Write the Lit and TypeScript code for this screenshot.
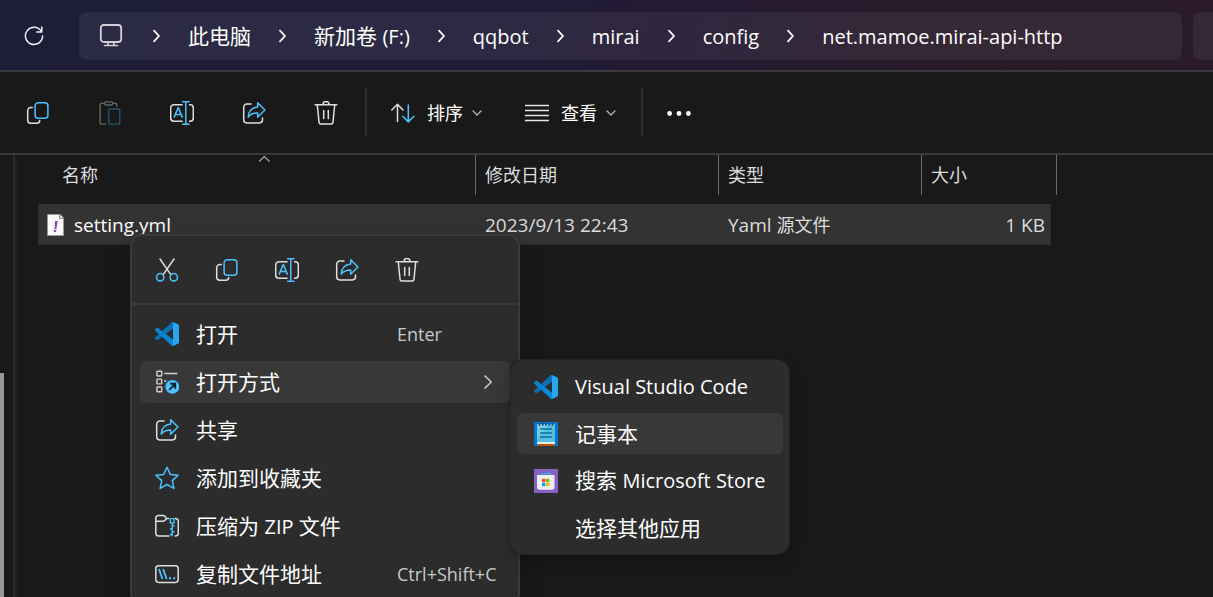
import { LitElement, html, svg, css, nothing } from "lit";
import { customElement, property, state } from "lit/decorators.js";
import { classMap } from "lit/directives/class-map.js";

const icon = (body: unknown, size = 24) =>
  html`<svg class="icon" width=${size} height=${size} viewBox="0 0 24 24" fill="none" aria-hidden="true">${body}</svg>`;

const W = "#dedede";
const B = "#4cc2ff";

const shapes: Record<string, unknown> = {
  refresh: svg`<path d="M19.2 7.2A8.6 8.6 0 1 0 20.6 12" stroke="#f0f0f0" stroke-width="1.5" stroke-linecap="round"/><path d="M19.8 3v5h-5" stroke="#f0f0f0" stroke-width="1.5" stroke-linecap="round" stroke-linejoin="round"/>`,
  computer: svg`<rect x="1.8" y="1" width="20.4" height="17" rx="3" stroke="#d2d0d8" stroke-width="1.8"/><path d="M5.5 21.5h13M9.2 18v3M14.8 18v3" stroke="#d2d0d8" stroke-width="1.6" stroke-linecap="round"/>`,
  copy: svg`<rect x="9.1" y="1.8" width="12.8" height="15.4" rx="3" stroke=${B} stroke-width="1.5"/><path d="M6.3 6.6H4.6A2.9 2.9 0 0 0 1.7 9.5v9.8a2.9 2.9 0 0 0 2.9 2.9h6.2a2.9 2.9 0 0 0 2.9-2.6" stroke=${W} stroke-width="1.5" stroke-linecap="round"/>`,
  paste: svg`<path d="M7 2.4H3.4a1.3 1.3 0 0 0-1.3 1.3v18.1a1.3 1.3 0 0 0 1.3 1.3H8" stroke="#666" stroke-width="1.4"/><rect x="6.6" y=".8" width="8.2" height="3.2" rx="1.6" stroke="#666" stroke-width="1.3"/><path d="M14.8 2.4h2.6a1.3 1.3 0 0 1 1.3 1.3v2" stroke="#666" stroke-width="1.4"/><rect x="10.8" y="8" width="11" height="15.1" rx="1.5" stroke="#2b536a" stroke-width="1.4"/>`,
  rename: svg`<path d="M12.6 3.8H3.8A3.1 3.1 0 0 0 .7 6.9v10.2a3.1 3.1 0 0 0 3.1 3.1h8.8M19 3.8h1.2a3.1 3.1 0 0 1 3.1 3.1v10.2a3.1 3.1 0 0 1-3.1 3.1H19" stroke=${W} stroke-width="1.5"/><path d="M4 16.6 8.1 6.8h.3l4.1 9.8M5.3 13.6h5.9" stroke=${B} stroke-width="1.5"/><path d="M12.6.8h6.4M12.6 23.2h6.4M15.8.8v22.4" stroke=${B} stroke-width="1.5" stroke-linecap="round"/>`,
  share: svg`<path d="M9 3H4.8A3.1 3.1 0 0 0 1.7 6.1v12.7a3.1 3.1 0 0 0 3.1 3.1h12.6a3.1 3.1 0 0 0 3.1-3.1V17" stroke=${W} stroke-width="1.5" stroke-linecap="round"/><path d="M15.7 1.8 22.9 9l-7.2 7.2v-4.3c-4.3 0-7.3 1.2-9.5 4.200.3-6 3.7-9.6 9.5-10.2z" stroke=${B} stroke-width="1.5" stroke-linejoin="round"/>`,
  trash: svg`<path d="M1.200 3.700h21.600" stroke=${W} stroke-width="1.600" stroke-linecap="round"/><path d="M9 3.400a3 3 0 0 1 6 0" stroke=${W} stroke-width="1.500"/><path d="M3.300 3.900 5 21a2.200 2.200 0 0 0 2.200 2.100h9.600A2.200 2.200 0 0 0 19 21l1.700-17.100" stroke=${W} stroke-width="1.500"/><path d="M9.700 9.500v8M14.300 9.500v8" stroke=${W} stroke-width="1.500" stroke-linecap="round"/>`,
  sort: svg`<path d="M6.500 20.500v-17M.8 9l5.700-5.700L12 9" stroke=${W} stroke-width="1.500" stroke-linecap="round" stroke-linejoin="round"/><path d="M17.300 4v16.800M11.800 15.300l5.500 5.600 5.600-5.600" stroke=${B} stroke-width="1.500" stroke-linecap="round" stroke-linejoin="round"/>`,
  view: svg`<path d="M0 4.500h24M0 9.500h24M0 14.500h24M0 19.500h24" stroke="#e4e4e4" stroke-width="1.400"/>`,
  more: svg`<g fill="#fff"><circle cx="2.600" cy="12.500" r="2.400"/><circle cx="12" cy="12.500" r="2.400"/><circle cx="21.400" cy="12.500" r="2.400"/></g>`,
  cut: svg`<path d="M5 1 15.800 16.600M19 1 8.200 16.600" stroke=${W} stroke-width="1.500" stroke-linecap="round"/><circle cx="5.200" cy="19.300" r="3.700" stroke=${B} stroke-width="1.500"/><circle cx="18.800" cy="19.300" r="3.700" stroke=${B} stroke-width="1.500"/>`,
  vscode: svg`<g transform="scale(.24)"><path fill="#0b6fb3" d="M96.4614 10.7962L75.8569 0.8755C73.4719 -0.2728 70.6217 0.2116 68.75 2.0833L1.2986 63.5832C-0.5157 65.2373 -0.5136 68.0937 1.3031 69.7452L6.8127 74.754C8.2979 76.1042 10.5347 76.2036 12.1338 74.9905L93.3609 13.3699C96.086 11.3026 100 13.2462 100 16.6667V16.4275C100 14.0265 98.6246 11.8378 96.4614 10.7962Z"/><path fill="#0b85d2" d="M96.4614 89.2038L75.8569 99.1245C73.4719 100.273 70.6217 99.7884 68.75 97.9167L1.2986 36.4169C-0.5157 34.7627 -0.5136 31.9063 1.3031 30.2548L6.8127 25.246C8.2979 23.8958 10.5347 23.7964 12.1338 25.0095L93.3609 86.6301C96.086 88.6974 100 86.7538 100 83.3333V83.5725C100 85.9735 98.6246 88.1622 96.4614 89.2038Z"/><path fill="#27a7f2" d="M75.8578 99.1263C73.4721 100.274 70.6219 99.7885 68.75 97.9166C71.0564 100.223 75 98.5895 75 95.3278V4.6721C75 1.4104 71.0564 -0.2231 68.75 2.0833C70.6219 0.2114 73.4721 -0.2737 75.8578 0.8736L96.4587 10.7807C98.6234 11.8217 100 14.0112 100 16.4132V83.5871C100 85.9891 98.6234 88.1786 96.4586 89.2196L75.8578 99.1263Z"/></g>`,
  openWith: svg`<g stroke="#d0d0d0" stroke-width="1.400"><rect x="1.900" y="1.200" width="4.800" height="4.800" rx=".6"/><rect x="1.900" y="9.100" width="4.800" height="4.800" rx=".6"/><rect x="1.900" y="17" width="4.800" height="4.800" rx=".6"/><path d="M9.200 3.500h13.200M9.200 11h2.200"/></g><circle cx="17.300" cy="16.800" r="6.900" fill=${B}/><path d="m14.300 19.800 5.600-5.700M15.200 13.700h5v5.100" stroke="#10242f" stroke-width="1.900"/>`,
  star: svg`<path d="m12 1.300 3.300 7.100 7.800.9-5.800 5.300 1.600 7.700-6.900-3.800-6.900 3.800 1.600-7.700L.9 9.300l7.800-.9z" stroke=${B} stroke-width="1.500" stroke-linejoin="round"/>`,
  zip: svg`<path d="M14.500 22H3.500A2.700 2.700 0 0 1 .8 19.300V4.300a2.700 2.700 0 0 1 2.700-2.700h4.700c1 0 1.600.4 2.100 1.100l1.200 1.900h2.500M.8 7.300h6.900c1 0 1.700-.3 2.300-1l1.500-1.700M19.800 4.600h.8a2.700 2.700 0 0 1 2.700 2.700v12a2.700 2.700 0 0 1-2.700 2.700h-.8" stroke=${W} stroke-width="1.500"/><path d="M15.300 4.600h3.800v4.300h-3.800zM17.200 9v13.200M17.200 11.800h2.300M17.200 15h-2.300M17.200 17.800h2.300M17.200 20.500h-2.300" stroke=${B} stroke-width="1.400"/>`,
  path: svg`<rect x=".8" y="3.800" width="22.400" height="16.600" rx="2.800" stroke=${W} stroke-width="1.500"/><path d="m4 7 3.400 10M8.200 7l3.400 10" stroke=${B} stroke-width="1.800"/><path d="M14 16.200h2M18.200 16.200h2" stroke=${B} stroke-width="2"/>`,
  notepad: svg`<path fill="#0078d4" d="M0 0h24v24H0z"/><path fill="#b8560f" d="M3.500 22h17v2h-17z"/><path fill="#eceff1" d="M3 19h18v3H3z"/><path fill="#55bfe0" d="M3 2h18v18H3z"/><path fill="#8fdcf0" d="M3 2h12L3 18z" opacity=".5"/><g stroke="#1b3f5c" stroke-width="1.600"><path d="M5.500 1v2.500M8.800 1v2.500M12 1v2.500M15.200 1v2.500M18.500 1v2.500"/></g><path d="M6 7h12M6 11h12M6 15h12" stroke="#0f7196" stroke-width="1.700"/>`,
  store: svg`<path fill="#8661c1" d="M0 0h24v24H0z"/><path d="M8 7V4.600h8V7" stroke="#2fb0ee" stroke-width="1.400"/><path d="M3 6h17.500v12a2.800 2.800 0 0 1-2.800 2.800H5.800A2.800 2.800 0 0 1 3 18z" fill="#f1eff3"/><path fill="#f25022" d="M8 9.800h3.400v3.400H8z"/><path fill="#7fba00" d="M12 9.800h3.400v3.400H12z"/><path fill="#00a4ef" d="M8 13.800h3.400v3.400H8z"/><path fill="#ffb900" d="M12 13.800h3.400v3.400H12z"/>`,
};

const mixed = (text: string) =>
  text
    .split(/([\x21-\x7e][\x20-\x7e]*)/)
    .map((run) => (/[\x21-\x7e]/.test(run) ? html`<span class="latin">${run}</span>` : run));

const base = css`
  * { box-sizing: border-box; }
  button {
    margin: 0;
    padding: 0;
    border: 0;
    background: none;
    color: inherit;
    font: inherit;
    text-align: left;
  }
  .icon { display: block; flex: none; }
  .latin { font-size: var(--latin-size); }
`;

interface MenuEntry {
  label: string;
  icon?: string;
  shortcut?: string;
  submenu?: boolean;
}

@customElement("path-bar")
class PathBar extends LitElement {
  @property({ attribute: false }) crumbs: string[] = [];

  static styles = [base, css`
    :host {
      display: flex;
      align-items: flex-start;
      height: 72px;
      padding-top: 12px;
      border-bottom: 2px solid #3a3a3c;
      background: linear-gradient(100deg, #1e1d38 0%, #1f1c39 38%, #241a33 56%, #291b29 78%, #2a1a29 100%);
      overflow: hidden;
      --latin-size: 20px;
    }
    .refresh { flex: none; display: grid; place-items: center; width: 68px; height: 48px; margin-right: 11px; }
    .address {
      flex: 1;
      min-width: 0;
      display: flex;
      align-items: center;
      gap: 27px;
      height: 48px;
      padding: 0 20px;
      border-radius: 8px;
      background: rgba(255, 255, 255, 0.06);
    }
    .crumb { white-space: nowrap; line-height: 28px; }
    .pc { margin-right: 2px; }
    .search { flex: none; width: 20px; height: 48px; margin-left: 11px; border-radius: 8px 0 0 8px; background: rgba(255, 255, 255, 0.06); }
  `];

  render() {
    const chevron = html`<svg class="icon" width="9" height="14" viewBox="0 0 9 14" fill="none" aria-hidden="true"><path d="m2 1.700 5 5.300-5 5.300" stroke="#fff" stroke-width="1.800" stroke-linecap="round" stroke-linejoin="round"/></svg>`;
    return html`
      <button class="refresh" aria-label="刷新">${icon(shapes.refresh)}</button>
      <nav class="address">
        <button class="pc" aria-label="位置">${icon(shapes.computer)}</button>
        ${this.crumbs.map((c) => html`${chevron}<button class="crumb">${mixed(c)}</button>`)}
      </nav>
      <div class="search"></div>
    `;
  }
}

@customElement("command-bar")
class CommandBar extends LitElement {
  static styles = [base, css`
    :host {
      display: flex;
      align-items: center;
      height: 83px;
      padding-left: 2px;
      border-bottom: 2px solid #3a3a3a;
      font-size: 18px;
      line-height: 24px;
    }
    .tool { flex: none; display: grid; place-items: center; width: 72px; height: 48px; }
    .rule { flex: none; width: 2px; height: 48px; background: #2e2e2e; }
    .drop { flex: none; display: flex; align-items: center; gap: 12px; height: 48px; }
    .drops { display: flex; gap: 42px; padding: 0 24px; }
    .more { margin-left: 24px; }
    .tools { display: flex; padding-right: 3px; }
    .chev { margin-left: -4px; }
  `];

  render() {
    const chevron = html`<svg class="icon chev" width="12" height="12" viewBox="0 0 12 12" fill="none" aria-hidden="true"><path d="m2 4 4 4 4-4" stroke="#b4b4b4" stroke-width="1.300" stroke-linecap="round"/></svg>`;
    const tools = [["copy", "复制"], ["paste", "粘贴"], ["rename", "重命名"], ["share", "共享"], ["trash", "删除"]];
    return html`
      <div class="tools">
        ${tools.map(([name, label]) => html`<button class="tool" aria-label=${label} ?disabled=${name === "paste"}>${icon(shapes[name])}</button>`)}
      </div>
      <div class="rule"></div>
      <div class="drops">
        <button class="drop">${icon(shapes.sort)}<span>排序</span>${chevron}</button>
        <button class="drop">${icon(shapes.view)}<span>查看</span>${chevron}</button>
      </div>
      <div class="rule"></div>
      <button class="more" aria-label="更多">${icon(shapes.more)}</button>
    `;
  }
}

@customElement("file-list")
class FileList extends LitElement {
  static styles = [base, css`
    :host { display: block; font-size: 18px; --latin-size: 19px; color: #dcdcdc; }
    table { width: 1019px; table-layout: fixed; border-collapse: separate; border-spacing: 0; margin-left: 21px; }
    .c-name { width: 438px; }
    .c-date { width: 243px; }
    .c-type { width: 203px; }
    .c-size { width: 129px; }
    .c-grip { width: 6px; }
    th {
      position: relative;
      height: 40px;
      padding: 0 9px;
      border-right: 1px solid #6a6a6a;
      font-weight: 400;
      text-align: left;
      line-height: 24px;
    }
    th:first-child { padding-left: 24px; }
    .caret { position: absolute; top: 0; left: 50%; }
    .spacer td { height: 9px; padding: 0; background: none; border: 0; }
    td {
      height: 41px;
      padding: 0 9px;
      background: #333;
      border: solid #2d2d2d;
      border-width: 1px 0;
      line-height: 28px;
      white-space: nowrap;
    }
    td:first-child { border-left-width: 1px; padding-left: 8px; }
    td.size { border-right-width: 1px; padding-right: 5px; text-align: right; }
    td.none { background: none; border: 0; padding: 0; }
    .file { display: flex; align-items: center; gap: 10px; color: #fff; }
  `];

  render() {
    return html`
      <table>
        <colgroup><col class="c-name"><col class="c-date"><col class="c-type"><col class="c-size"><col class="c-grip"></colgroup>
        <thead>
          <tr>
            <th aria-sort="ascending">名称
              <svg class="caret" width="14" height="8" viewBox="0 0 14 8" fill="none" aria-hidden="true"><path d="m2 6.500 5.300-5 5.300 5" stroke="#aaa" stroke-width="1.200"/></svg>
            </th>
            <th>修改日期</th>
            <th>类型</th>
            <th colspan="2">大小</th>
          </tr>
        </thead>
        <tbody>
          <tr class="spacer"><td colspan="5"></td></tr>
          <tr>
            <td>
              <span class="file">
                <svg class="icon" width="17" height="22" viewBox="0 0 17 22" aria-hidden="true">
                  <path d="M.5.500h12.500l3.500 3.500v17.500H.500z" fill="#fafafa" stroke="#9a9a9a"/>
                  <path d="M12.500.500v4h4" fill="#ddd" stroke="#8a8a8a"/>
                  <path d="m8 7 2.700 0-1.300 8H7.500z" fill="#8b4fae"/><circle cx="8" cy="17" r="1.300" fill="#8b4fae"/>
                </svg>
                <span class="latin">setting.yml</span>
              </span>
            </td>
            <td><span class="latin">2023/9/13 22:43</span></td>
            <td>${mixed("Yaml 源文件")}</td>
            <td class="size"><span class="latin">1 KB</span></td>
            <td class="none"></td>
          </tr>
        </tbody>
      </table>
    `;
  }
}

@customElement("context-menu")
class ContextMenu extends LitElement {
  @property({ attribute: false }) entries: MenuEntry[] = [];
  @property({ attribute: false }) actions: [string, string][] = [];
  @property() active = "";

  static styles = [base, css`
    :host {
      display: block;
      border: 2px solid #3a3a3a;
      border-radius: 12px;
      background: #2c2c2c;
      color: #fff;
      --latin-size: 20px;
      box-shadow: 0 8px 24px rgba(0, 0, 0, 0.25);
    }
    :host([compact]) { border: 0; box-shadow: 0 0 0 1px #222, 0 6px 16px rgba(0, 0, 0, 0.3); }
    .actions { display: flex; height: 69px; padding: 0 5px; border-bottom: 2px solid #3a3a3a; align-items: center; }
    .action { display: grid; place-items: center; width: 60px; height: 48px; }
    .items { display: flex; flex-direction: column; gap: 6px; padding: 8px; }
    :host([compact]) .items { padding: 6px; }
    .item {
      display: grid;
      grid-template-columns: 24px 1fr 105px;
      column-gap: 17px;
      align-items: center;
      width: 100%;
      height: 42px;
      padding: 0 8px 0 15px;
      border-radius: 6px;
      line-height: 28px;
      white-space: nowrap;
    }
    :host([compact]) .item { grid-template-columns: 24px 1fr; height: 41px; padding: 0 8px 0 17px; }
    .item.active { background: #383838; }
    .label { grid-column: 2; }
    .shortcut { font-size: 18px; color: #c8c8c8; }
    .more { justify-self: end; margin-right: 9px; }
  `];

  render() {
    return html`
      ${this.actions.length
        ? html`<div class="actions">${this.actions.map(([name, label]) => html`<button class="action" aria-label=${label}>${icon(shapes[name])}</button>`)}</div>`
        : nothing}
      <div class="items" role="menu">
        ${this.entries.map((e) => html`
          <button role="menuitem" class=${classMap({ item: true, active: e.label === this.active })}>
            ${e.icon ? icon(shapes[e.icon]) : nothing}
            <span class="label">${mixed(e.label)}</span>
            ${e.shortcut ? html`<span class="shortcut">${e.shortcut}</span>` : nothing}
            ${e.submenu ? html`<svg class="icon more" width="10" height="16" viewBox="0 0 10 16" fill="none" aria-hidden="true"><path d="m1.500 1.500 6.700 6.500-6.700 6.500" stroke="#d0d0d0" stroke-width="1.500"/></svg>` : nothing}
          </button>`)}
      </div>
    `;
  }
}

@customElement("app-root")
class AppRoot extends LitElement {
  @state() private openWith = "记事本";

  static styles = [base, css`
    :host {
      position: relative;
      display: flex;
      flex-direction: column;
      height: 100vh;
      overflow: hidden;
      background: #191919;
      color: #fff;
      font: 21px/28px "Open Sans", "Noto Sans CJK SC", sans-serif;
    }
    .body { flex: 1; min-height: 0; display: flex; }
    .side { flex: none; display: flex; align-items: flex-end; width: 17px; border-right: 2px solid #202020; box-shadow: inset -2px 0 #2a2a2a; }
    .thumb { width: 4px; height: calc(100% - 218px); background: #999; }
    .main { flex: 1; min-width: 0; }
    .menu { position: absolute; left: 130px; top: 234px; width: 390px; }
    .submenu { position: absolute; left: 511px; top: 360px; width: 278px; }
  `];

  render() {
    return html`
      <path-bar .crumbs=${["此电脑", "新加卷 (F:)", "qqbot", "mirai", "config", "net.mamoe.mirai-api-http"]}></path-bar>
      <command-bar></command-bar>
      <div class="body">
        <div class="side"><div class="thumb"></div></div>
        <main class="main"><file-list></file-list></main>
      </div>
      <context-menu
        class="menu"
        active="打开方式"
        .actions=${[["cut", "剪切"], ["copy", "复制"], ["rename", "重命名"], ["share", "共享"], ["trash", "删除"]]}
        .entries=${[
          { label: "打开", icon: "vscode", shortcut: "Enter" },
          { label: "打开方式", icon: "openWith", submenu: true },
          { label: "共享", icon: "share" },
          { label: "添加到收藏夹", icon: "star" },
          { label: "压缩为 ZIP 文件", icon: "zip" },
          { label: "复制文件地址", icon: "path", shortcut: "Ctrl+Shift+C" },
        ]}
      ></context-menu>
      <context-menu
        class="submenu"
        compact
        active=${this.openWith}
        .entries=${[
          { label: "Visual Studio Code", icon: "vscode" },
          { label: "记事本", icon: "notepad" },
          { label: "搜索 Microsoft Store", icon: "store" },
          { label: "选择其他应用" },
        ]}
      ></context-menu>
    `;
  }
}
